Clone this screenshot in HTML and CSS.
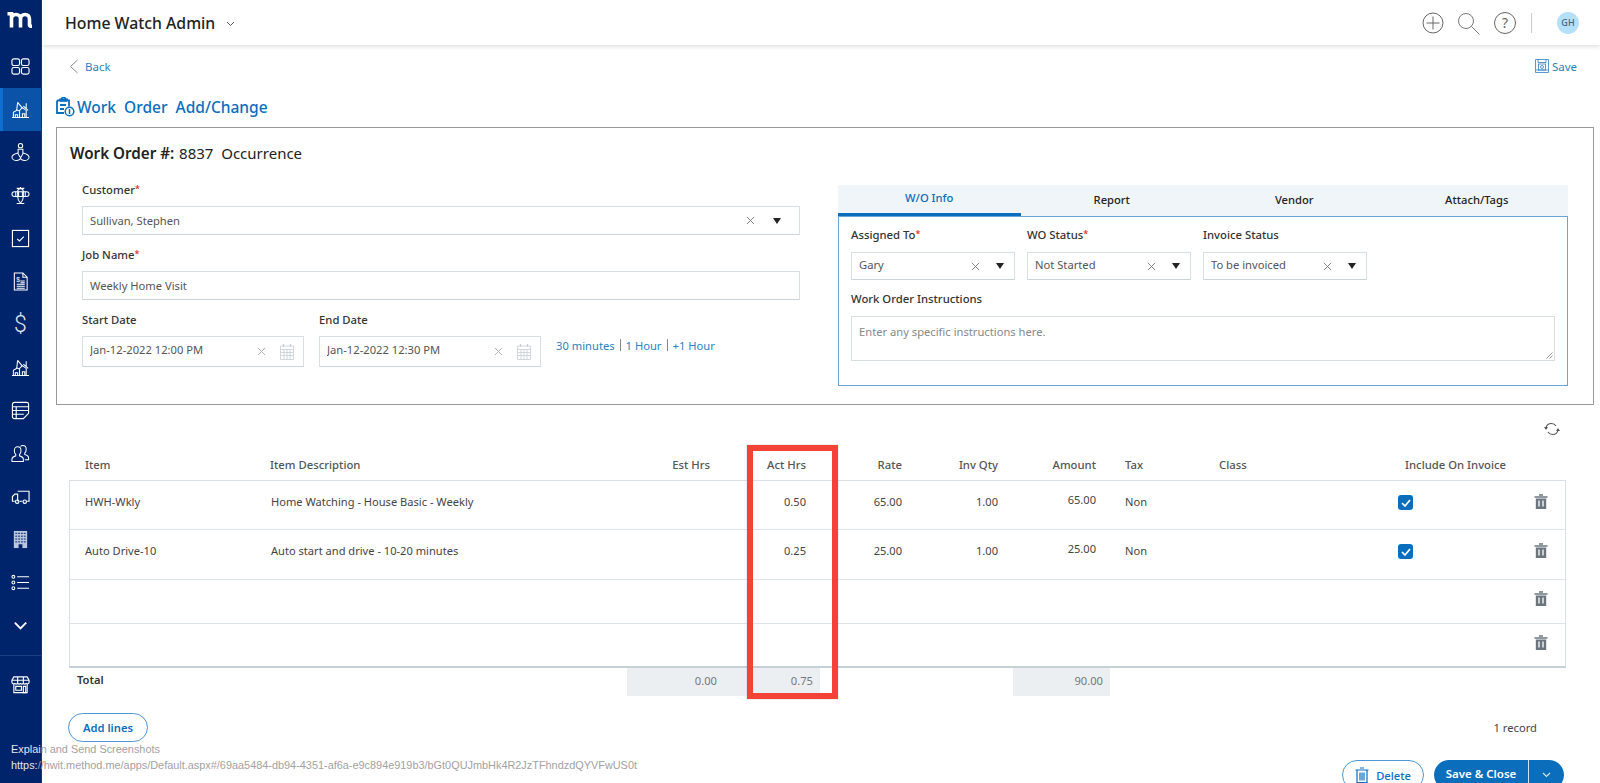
FILE: index.html
```html
<!DOCTYPE html>
<html lang="en">
<head>
    <meta charset="UTF-8">
    <meta name="viewport" content="width=device-width, initial-scale=1.0">
    <title>Work Order Add/Change</title>
    <link rel="stylesheet" href="styles.css">
</head>
<body>
    <svg class="defs" width="0" height="0">
        <symbol id="i-x" viewBox="0 0 10 10"><path d="M1 1l8 8M9 1l-8 8" fill="none" stroke="currentColor" stroke-width="1"/></symbol>
        <symbol id="i-caret" viewBox="0 0 10 8"><path d="M1 1h8L5 7z" fill="currentColor"/></symbol>
        <symbol id="i-cal" viewBox="0 0 14 17"><path d="M.5 3h13v13.500H.5zM.5 6.500h13M.5 9.500h13M.5 12.500h13M4 6.500v10M7 6.500v10M10 6.500v10" fill="none" stroke="currentColor" stroke-width=".8"/><path d="M3.500 1v3M10.500 1v3" stroke="currentColor" stroke-width="1.200"/></symbol>
        <symbol id="i-trash" viewBox="0 0 14 16"><path d="M5 1.500h4M.5 3.500h13" stroke="currentColor" stroke-width="1.600" fill="none"/><path d="M1.800 5h10.400v10.500H1.800z" fill="currentColor"/><path d="M5 7v6M9 7v6" stroke="#fff" stroke-width="1.300"/></symbol>
        <symbol id="i-house" viewBox="0 0 20 20"><g fill="none" stroke="#fff" stroke-width="1.100"><path d="M1 18.500h18M2.500 18.500v-5.500l4-2.500 3 1.500M4.500 18.500v-3h2.500v3M9 18.500V11l3-3 4 3v7.500M12 18.500v-4h2.500v4"/><path d="M7 2.500l5 6M7 2.500l-1 8M16 3.500v6M13 6.500l5 4.500"/></g></symbol>
    </svg>

    <div class="app">
        <!-- left nav -->
        <nav class="side">
            <div class="logo">
                <svg width="28" height="16" viewBox="0 0 28 16"><path d="M.5 1.700h4V15.500M4.500 7c0-3 2-4.500 4.500-4.500s4.500 1.500 4.500 4.500v8.500M13.500 7c0-3 2-4.500 4.500-4.500s4.500 1.500 4.500 4.500v6c0 1 .8 1.300 2.500 1.300" fill="none" stroke="#fff" stroke-width="3.600"/></svg>
            </div>
            <a class="nav-item">
                <svg class="nav-icon" viewBox="0 0 20 20"><g fill="none" stroke="#fff" stroke-width="1.200"><rect x="1" y="2" width="8" height="7" rx="2"/><rect x="11" y="2" width="8" height="7" rx="2"/><rect x="1" y="11" width="8" height="7" rx="2"/><rect x="11" y="11" width="8" height="7" rx="2"/></g></svg>
            </a>
            <a class="nav-item active"><svg class="nav-icon"><use href="#i-house"/></svg></a>
            <a class="nav-item">
                <svg class="nav-icon" viewBox="0 0 20 20"><g fill="none" stroke="#fff" stroke-width="1.100"><circle cx="10" cy="2.800" r="2.300"/><path d="M7.500 6.500h5v5l-2.500 4-2.500-4zM7 10.500C3.500 11.500 1 13 1 15s2.500 3.500 5 3.500c1.800 0 3-.8 4-2 1 1.200 2.200 2 4 2 2.500 0 5-1.500 5-3.500s-2.500-3.500-6-4.500"/></g></svg>
            </a>
            <a class="nav-item">
                <svg class="nav-icon" viewBox="0 0 20 20"><g fill="none" stroke="#fff" stroke-width="1.100"><path d="M6 2.500h8M10 1v2"/><rect x="1" y="6" width="18" height="5" rx="2.500"/><path d="M5 6v5M8 6v5M12 6v5M15 6v5"/><path d="M7 6c0-2 1-3 3-3s3 1 3 3v5c0 3-1 5-3 7-2-2-3-4-3-7zM6 18.500h8"/></g></svg>
            </a>
            <a class="nav-item">
                <svg class="nav-icon" viewBox="0 0 20 20"><rect x="1.500" y="1.500" width="17" height="17" fill="none" stroke="#fff" stroke-width="1.200"/><path d="M6.500 10.500l2.500 2 4.500-4.500" fill="none" stroke="#fff" stroke-width="1.200"/></svg>
            </a>
            <a class="nav-item">
                <svg class="nav-icon" viewBox="0 0 20 20"><g fill="none" stroke="#fff" stroke-width="1.100"><path d="M3.500 1h9l4.500 4.500V19h-13.500zM12.500 1v4.500H17"/><path d="M6 13h8.500M6 15h8.500M6 17h8.500M10 9.500h4.500M10 11.300h4.500"/></g><text class="doc-dollar" x="5.500" y="10.500">$</text></svg>
            </a>
            <a class="nav-item"><span class="nav-dollar">$</span></a>
            <a class="nav-item"><svg class="nav-icon"><use href="#i-house"/></svg></a>
            <a class="nav-item">
                <svg class="nav-icon" viewBox="0 0 20 20"><g fill="none" stroke="#fff" stroke-width="1.200"><path d="M3.500 1.500h13a2 2 0 0 1 2 2V13l-5.500 5.500H3.500a2 2 0 0 1-2-2v-13a2 2 0 0 1 2-2zM1.500 6h17M1.500 10h17M1.500 14h12M5.500 6v12"/></g></svg>
            </a>
            <a class="nav-item">
                <svg class="nav-icon" viewBox="0 0 20 20"><g fill="none" stroke="#fff" stroke-width="1.100"><path d="M1 18.500v-2.500c0-2 2-3 4-3.500v-1.500c-1-1-1.500-2-1.500-4C3.500 4.500 5 3 7 3s3.500 1.500 3.500 4c0 2-.5 3-1.500 4v1.500c2 .5 4 1.500 4 3.500v2.500z"/><path d="M10 2.500c.8-.8 1.500-1 2.500-1 2 0 3.500 1.500 3.500 4 0 2-.5 3-1.500 4V11c2 .5 4 1.500 4 3.500v2h-4"/></g></svg>
            </a>
            <a class="nav-item">
                <svg class="nav-icon" viewBox="0 0 20 20"><g fill="none" stroke="#fff" stroke-width="1.200"><path d="M7 4.500h12v10.500h-2M12 15H9M4 15H1.500v-5L4 7.500h3V15"/><circle cx="6.500" cy="15.500" r="1.800"/><circle cx="14.500" cy="15.500" r="1.800"/></g></svg>
            </a>
            <a class="nav-item">
                <svg class="nav-icon" viewBox="0 0 20 20"><path d="M3 1h14v18H3z" fill="#b9c6dd"/><path d="M4.500 3.500h11M4.500 6.500h11M4.500 9.500h11M4.500 12.500h11" stroke="#00246b" stroke-width="1" stroke-dasharray="2 1"/><path d="M8 15h4v4H8z" fill="#00246b"/></svg>
            </a>
            <a class="nav-item">
                <svg class="nav-icon" viewBox="0 0 20 20"><g fill="none" stroke="#fff" stroke-width="1.100"><circle cx="2.500" cy="4" r="1.500"/><circle cx="2.500" cy="10" r="1.500"/><circle cx="2.500" cy="16" r="1.500"/><path d="M6.500 4H19M6.500 10H19M6.500 16H19"/></g></svg>
            </a>
            <a class="nav-item">
                <svg class="nav-icon" viewBox="0 0 20 20"><path d="M4 7l6 6 6-6" fill="none" stroke="#fff" stroke-width="2"/></svg>
            </a>
            <div class="nav-sep"></div>
            <a class="nav-item">
                <svg class="nav-icon" viewBox="0 0 20 20"><g fill="none" stroke="#fff" stroke-width="1.200"><path d="M3 2h14l2 3.500V8a2 2 0 0 1-3 1 2.500 2.500 0 0 1-3 0 2.500 2.500 0 0 1-3 0 2.500 2.500 0 0 1-3 0 2.500 2.500 0 0 1-3 0 2 2 0 0 1-3-1V5.500zM1 5.500h18M7 2v7M13 2v7M3 9.500V18.500h14V9.500"/><path d="M5 12h6v4H5zM13 12h2.500v6.500H13z"/></g></svg>
            </a>
        </nav>

        <main class="main">
            <header class="topbar">
                <span class="app-name">Home Watch Admin</span>
                <svg class="app-caret" width="9" height="6" viewBox="0 0 9 6"><path d="M1 1l3.500 3.500L8 1" fill="none" stroke="#555" stroke-width="1"/></svg>
                <div class="top-icons">
                    <svg class="top-plus" width="22" height="22" viewBox="0 0 22 22"><g fill="none" stroke="#666" stroke-width="1"><circle cx="11" cy="11" r="10"/><path d="M11 4.500v13M4.500 11h13"/></g></svg>
                    <svg class="top-search" width="24" height="24" viewBox="0 0 24 24"><g fill="none" stroke="#777" stroke-width="1"><circle cx="9" cy="9" r="7.500"/><path d="M14.500 14.500l8 8"/></g></svg>
                    <span class="top-help">?</span>
                    <span class="top-sep"></span>
                    <span class="avatar">GH</span>
                </div>
            </header>

            <div class="toolbar">
                <a class="link back">
                    <svg width="10" height="15" viewBox="0 0 10 15"><path d="M8.500 1L1.500 7.500l7 6.500" fill="none" stroke="#888" stroke-width="1"/></svg>
                    Back
                </a>
                <a class="link save">
                    <svg width="14" height="14" viewBox="0 0 14 14"><g fill="none" stroke="#2f7fc1" stroke-width=".8"><path d="M.5.500h13v13H.5zM3 .5v3h8v-3M1 11h12"/><rect x="3.500" y="5" width="7" height="6"/><circle cx="7" cy="8" r="1.500"/></g></svg>
                    Save
                </a>
            </div>

            <h1 class="page-title">
                <svg width="19" height="20" viewBox="0 0 19 20"><path d="M1 3.500h3V2.500h1.500a2 2 0 0 1 4 0H11v1h2v6" fill="none" stroke="#0a6ebd" stroke-width="1.800"/><path d="M4 1.800h7v3H4z" fill="#0a6ebd"/><path d="M1 3.500V16h7" fill="none" stroke="#0a6ebd" stroke-width="1.800"/><path d="M4 7h6v2H4zM4 11h4v2H4z" fill="#0a6ebd"/><circle cx="13.500" cy="14.500" r="4.300" fill="none" stroke="#0a6ebd" stroke-width="1.500"/><path d="M13.500 12v5" stroke="#0a6ebd" stroke-width="1.500"/></svg>
                <span>Work&nbsp; Order&nbsp; Add/Change</span>
            </h1>

            <section class="card">
                <h2 class="card-head"><b>Work Order #:</b> 8837&nbsp; Occurrence</h2>
                <div class="card-body">
                    <div class="left-col">
                        <div class="field">
                            <label>Customer<em>*</em></label>
                            <div class="input">
                                <span class="val">Sullivan, Stephen</span>
                                <svg class="ico-x"><use href="#i-x"/></svg>
                                <svg class="ico-caret ico-caret-wide"><use href="#i-caret"/></svg>
                            </div>
                        </div>
                        <div class="field">
                            <label>Job Name<em>*</em></label>
                            <div class="input"><span class="val">Weekly Home Visit</span></div>
                        </div>
                        <div class="date-row">
                            <div class="field date-field">
                                <label>Start Date</label>
                                <div class="input date-input">
                                    <span class="val">Jan-12-2022 12:00 PM</span>
                                    <svg class="ico-x"><use href="#i-x"/></svg>
                                    <svg class="ico-cal"><use href="#i-cal"/></svg>
                                </div>
                            </div>
                            <div class="field date-field">
                                <label>End Date</label>
                                <div class="input date-input">
                                    <span class="val">Jan-12-2022 12:30 PM</span>
                                    <svg class="ico-x"><use href="#i-x"/></svg>
                                    <svg class="ico-cal"><use href="#i-cal"/></svg>
                                </div>
                            </div>
                            <div class="quick-links">
                                <a>30 minutes</a><i></i><a>1 Hour</a><i></i><a>+1 Hour</a>
                            </div>
                        </div>
                    </div>

                    <div class="right-col">
                        <div class="tabs">
                            <a class="tab active">W/O Info</a>
                            <a class="tab">Report</a>
                            <a class="tab">Vendor</a>
                            <a class="tab">Attach/Tags</a>
                        </div>
                        <div class="tab-panel">
                            <div class="panel-row">
                                <div class="field small">
                                    <label>Assigned To<em>*</em></label>
                                    <div class="input">
                                        <span class="val">Gary</span>
                                        <svg class="ico-x"><use href="#i-x"/></svg>
                                        <svg class="ico-caret"><use href="#i-caret"/></svg>
                                    </div>
                                </div>
                                <div class="field small">
                                    <label>WO Status<em>*</em></label>
                                    <div class="input">
                                        <span class="val">Not Started</span>
                                        <svg class="ico-x"><use href="#i-x"/></svg>
                                        <svg class="ico-caret"><use href="#i-caret"/></svg>
                                    </div>
                                </div>
                                <div class="field small">
                                    <label>Invoice Status</label>
                                    <div class="input">
                                        <span class="val">To be invoiced</span>
                                        <svg class="ico-x"><use href="#i-x"/></svg>
                                        <svg class="ico-caret"><use href="#i-caret"/></svg>
                                    </div>
                                </div>
                            </div>
                            <div class="field instr">
                                <label>Work Order Instructions</label>
                                <div class="textarea">
                                    Enter any specific instructions here.
                                    <svg class="grip" width="7" height="7" viewBox="0 0 7 7"><path d="M6.500.5l-6 6M6.500 3.500l-3 3" stroke="#777" stroke-width=".8"/></svg>
                                </div>
                            </div>
                        </div>
                    </div>
                </div>
            </section>

            <div class="refresh">
                <svg width="16" height="14" viewBox="0 0 16 14"><g fill="none" stroke="#555" stroke-width="1.100"><path d="M2 6c.5-3 3-4.500 5.500-4.500 2 0 3.500 1 4.500 2.500M14 8c-.5 3-3 4.500-5.500 4.500-2 0-3.500-1-4.500-2.500"/></g><path d="M0 5h4L2 8zM16 9h-4l2-3z" fill="#555"/></svg>
            </div>

            <section class="lines">
                <div class="grid head">
                    <div class="c-first">Item</div>
                    <div>Item Description</div>
                    <div class="num">Est Hrs</div>
                    <div class="num">Act Hrs</div>
                    <div class="num">Rate</div>
                    <div class="num">Inv Qty</div>
                    <div class="num">Amount</div>
                    <div class="c-tax">Tax</div>
                    <div>Class</div>
                    <div class="c-inc">Include On Invoice</div>
                    <div></div>
                </div>
                <div class="table">
                    <div class="grid row">
                        <div class="c-first">HWH-Wkly</div>
                        <div class="c-desc">Home Watching - House Basic - Weekly</div>
                        <div class="num"></div>
                        <div class="num">0.50</div>
                        <div class="num">65.00</div>
                        <div class="num">1.00</div>
                        <div class="num up">65.00</div>
                        <div class="c-tax">Non</div>
                        <div></div>
                        <div><span class="check"><svg width="10" height="8" viewBox="0 0 10 8"><path d="M1 4l3 3 5-6" fill="none" stroke="#fff" stroke-width="1.700"/></svg></span></div>
                        <div class="c-trash"><svg class="ico-trash"><use href="#i-trash"/></svg></div>
                    </div>
                    <div class="grid row row-2">
                        <div class="c-first">Auto Drive-10</div>
                        <div class="c-desc">Auto start and drive - 10-20 minutes</div>
                        <div class="num"></div>
                        <div class="num">0.25</div>
                        <div class="num">25.00</div>
                        <div class="num">1.00</div>
                        <div class="num up">25.00</div>
                        <div class="c-tax">Non</div>
                        <div></div>
                        <div><span class="check"><svg width="10" height="8" viewBox="0 0 10 8"><path d="M1 4l3 3 5-6" fill="none" stroke="#fff" stroke-width="1.700"/></svg></span></div>
                        <div class="c-trash"><svg class="ico-trash"><use href="#i-trash"/></svg></div>
                    </div>
                    <div class="row-empty"><svg class="ico-trash"><use href="#i-trash"/></svg></div>
                    <div class="row-empty last"><svg class="ico-trash"><use href="#i-trash"/></svg></div>
                </div>
                <div class="totals">
                    <div class="t-label">Total</div>
                    <div class="t-cell">0.00</div>
                    <div class="t-cell">0.75</div>
                    <div class="t-gap"></div>
                    <div class="t-cell">90.00</div>
                </div>
                <div class="highlight"></div>
            </section>

            <div class="lines-foot">
                <a class="pill">Add lines</a>
                <span class="records">1 record</span>
            </div>

            <div class="actions">
                <a class="pill pill-del">
                    <svg width="14" height="16" viewBox="0 0 14 16"><g fill="none" stroke="#0a6ebd" stroke-width="1.200"><path d="M5 1h4M.5 3h13M2 3v12.500h10V3M5 5.500v8M7 5.500v8M9 5.500v8"/></g></svg>
                    Delete
                </a>
                <div class="save-close">
                    <a class="sc-main">Save &amp; Close</a>
                    <a class="sc-more"><svg width="9" height="6" viewBox="0 0 9 6"><path d="M1 1l3.500 3.500L8 1" fill="none" stroke="#cfe3f5" stroke-width="1.200"/></svg></a>
                </div>
            </div>
        </main>
    </div>

    <!-- browser link hint that was caught by the screenshot -->
    <div class="hint">
        <div><span class="on-nav">Explai</span>n and Send Screenshots</div>
        <div><span class="on-nav">https:</span>//hwit.method.me/apps/Default.aspx#/69aa5484-db94-4351-af6a-e9c894e919b3/bGt0QUJmbHk4R2JzTFhndzdQYVFwUS0t</div>
    </div>
</body>
</html>
```

FILE: styles.css
```css
/* --- RESET & BASE -------------------------------------- */
* { box-sizing: border-box; margin: 0; padding: 0; }
html, body { height: 100%; overflow: hidden; background: #fff; }
body { font-family: "Noto Sans", "Open Sans", sans-serif; font-size: 11px; color: #444; position: relative; }
a { color: inherit; text-decoration: none; }
.defs { position: absolute; }

.app { display: flex; height: 783px; overflow: hidden; }

/* --- LEFT NAV ------------------------------------------ */
.side { width: 42px; flex: none; background: #00246b; display: flex; flex-direction: column; align-items: stretch; border-right: 1px solid #0a3a86; }
.logo { height: 45px; display: flex; align-items: center; justify-content: center; padding-bottom: 6px; }
.nav-item { height: 43px; flex: none; display: flex; align-items: center; justify-content: center; }
.nav-item.active { background: #0a53a8; border-left: 3px solid #0f6fd0; padding-right: 3px; }
.nav-icon { width: 19px; height: 19px; display: block; }
.nav-dollar { font-family: "Roboto", sans-serif; font-size: 23px; font-weight: 300; color: #dfe6f2; }
.doc-dollar { font-size: 7px; fill: #fff; font-family: "Liberation Sans", sans-serif; }
.nav-sep { height: 1px; background: #1c3f82; margin-top: 8px; margin-bottom: 7px; flex: none; }

/* --- MAIN ---------------------------------------------- */
.main { flex: 1; min-width: 0; position: relative; }

.topbar { height: 45px; display: flex; align-items: center; padding: 0 20px 0 23px; box-shadow: 0 1px 5px rgba(0, 0, 0, .16); position: relative; }
.app-name { font-size: 15.8px; font-weight: 500; color: #222; }
.app-caret { margin-left: 11px; margin-top: 2px; }
.top-icons { margin-left: auto; display: flex; align-items: center; }
.top-plus { margin-right: 13px; }
.top-search { margin-right: 13px; margin-top: 2px; }
.top-help { width: 22px; height: 22px; border: 1px solid #666; border-radius: 50%; font-size: 14px; line-height: 20px; text-align: center; color: #666; }
.top-sep { width: 1px; height: 20px; background: #ccc; margin: 0 25px 0 15px; }
.avatar { width: 22px; height: 22px; border-radius: 50%; background: #b5e0fb; color: #47627c; font-size: 9px; font-weight: 500; line-height: 22px; text-align: center; margin-right: 1px; }

.toolbar { height: 42px; display: flex; align-items: center; justify-content: space-between; padding: 0 23px 0 27px; }
.link { display: flex; align-items: center; gap: 6px; font-size: 11.5px; color: #2f7fc1; }
.save { gap: 3px; }

.page-title { height: 40px; padding: 0 0 0 14px; display: flex; align-items: center; gap: 2px; font-size: 15.5px; font-weight: 500; color: #0a6ebd; }

/* --- CARD ---------------------------------------------- */
.card { margin-left: 14px; width: 1538px; height: 278px; border: 1px solid #999; padding: 14px 25px 0; }
.card-head { font-size: 15px; font-weight: 400; line-height: 22px; color: #222; margin-left: -12px; margin-bottom: 18px; }
.card-head b { font-weight: 600; margin-right: 1px; font-size: 15.2px; }
.card-body { display: grid; grid-template-columns: 718px 730px; column-gap: 38px; }

.field label { display: block; height: 16px; line-height: 16px; font-size: 11.3px; font-weight: 500; color: #333; margin-bottom: 8px; }
.field em { color: #e02020; font-style: normal; font-size: 9px; position: relative; top: -2px; }
.left-col .field { margin-bottom: 12px; }

.input { height: 29px; border: 1px solid #d8dee2; border-bottom-color: #cdd4d9; display: flex; align-items: center; padding: 0 9px 0 7px; font-size: 11.2px; color: #555; border-radius: 1px; }
.val { flex: 1; white-space: nowrap; overflow: hidden; }
.ico-x { width: 9px; height: 9px; color: #777; flex: none; }
.ico-caret { width: 10px; height: 8px; color: #222; flex: none; margin-left: 15px; }
.ico-caret-wide { margin-left: 17px; margin-right: 8px; }
.ico-cal { width: 14px; height: 17px; color: #c6ced3; flex: none; margin-left: 14px; }

.date-row { display: flex; }
.date-field { width: 222px; margin-right: 15px; margin-bottom: 0; }
.date-input { height: 31px; }
.date-input .val { margin-top: -4px; }
.date-input .ico-x { color: #aaa; }
.quick-links { display: flex; align-items: center; font-size: 11.2px; color: #2f7fc1; margin-top: 19px; height: 28px; }
.quick-links i { width: 1px; height: 12px; background: #888; margin: 0 5px; }

/* --- TABS ---------------------------------------------- */
.right-col { margin-top: 3px; }
.tabs { display: grid; grid-template-columns: repeat(4, 1fr); height: 31px; background: #eff5f8; }
.tab { font-size: 11.2px; font-weight: 500; color: #222; text-align: center; line-height: 30px; padding-top: 0; }
.tab.active { color: #0a6ebd; border-bottom: 3px solid #0a6ebd; line-height: 26px; }
.tab-panel { height: 170px; border: 1px solid #6aa5d8; padding: 10px 12px 0; }
.panel-row { display: flex; gap: 12px; margin-bottom: 11px; }
.field.small { width: 164px; }
.field.small label, .instr label { margin-bottom: 9px; }
.field.small .input { height: 28px; }
.field.small .val { margin-top: -3px; }
.textarea { height: 45px; border: 1px solid #d8dee2; padding: 7px 7px; font-size: 11.2px; color: #888; position: relative; }
.grip { position: absolute; right: 1px; bottom: 1px; }

/* --- LINES TABLE --------------------------------------- */
.refresh { height: 47px; display: flex; align-items: center; justify-content: flex-end; padding: 0 40px 0 0; }
.lines { margin-left: 27px; width: 1497px; position: relative; }
.grid { display: grid; grid-template-columns: 200px 340px 100px 96px 96px 96px 98px 123px 178px 120px 48px; padding-left: 1px; }
.head { height: 28px; font-size: 11.3px; font-weight: 500; color: #555; line-height: 26px; }
.head .c-first { padding-left: 15px; }
.num { text-align: right; }
.c-tax { padding-left: 29px; }
.c-inc { padding-left: 8px; white-space: nowrap; }

.table { border: 1px solid #d8e1e5; border-bottom: 2px solid #c6d1d6; height: 188px; }
.table .grid { padding-left: 0; }
.row { height: 49px; border-bottom: 1px solid #dde5e9; padding-top: 12px; font-size: 11.1px; line-height: 18px; color: #444; }
.row-2 { height: 50px; }
.row > div:nth-child(n+3) { position: relative; }
.row .c-first { padding-left: 15px; }
.c-desc { padding-left: 1px; }
.row .up { top: -2px; }
.row-empty { height: 44px; border-bottom: 1px solid #dde5e9; padding: 10px 0 0 1447px; }
.row-empty.last { border-bottom: 0; height: 42px; }
.c-trash { padding-left: 17px; }
.ico-trash { width: 14px; height: 17px; color: #6c757d; display: block; }
.row-empty .ico-trash { margin-left: 17px; }
.check { width: 15px; height: 15px; margin-left: 1px; background: #0a6ebd; border-radius: 3px; display: flex; align-items: center; justify-content: center; margin-top: 2px; }

.totals { display: flex; height: 28px; font-size: 11.2px; line-height: 25px; color: #777; }
.t-label { width: 558px; padding-left: 8px; font-weight: 600; color: #333; line-height: 23px; }
.t-cell { width: 97px; background: #eceff1; text-align: right; padding-right: 7px; }
.t-gap { width: 193px; }
.t-label + .t-cell + .t-cell { width: 96px; }

.highlight { position: absolute; left: 678px; top: -7px; width: 91px; height: 254px; border: 6px solid #f44336; box-shadow: 0 0 1px rgba(0, 0, 0, .4); }

.lines-foot { margin: 17px 0 0 26px; width: 1469px; height: 29px; display: flex; justify-content: space-between; align-items: center; }
.pill { height: 29px; border: 1px solid #4d97d4; border-radius: 15px; padding: 0 14px; display: flex; align-items: center; font-size: 11.2px; font-weight: 600; color: #0a6ebd; }
.records { font-size: 11.2px; color: #444; }

.actions { display: flex; justify-content: flex-end; gap: 10px; margin-top: 18px; padding-right: 36px; }
.pill-del { width: 82px; height: 30px; justify-content: center; gap: 7px; padding: 0; font-weight: 500; }
.save-close { display: flex; width: 130px; height: 30px; background: #0a6ebd; border-radius: 15px; color: #fff; font-size: 11.5px; font-weight: 600; }
.sc-main { width: 95px; text-align: center; line-height: 28px; border-right: 1px solid #cfe3f5; }
.sc-more { flex: 1; display: flex; align-items: center; justify-content: center; }

/* --- LINK HINT ----------------------------------------- */
.hint { position: absolute; left: 11px; top: 741px; font-family: "Liberation Sans", sans-serif; font-size: 10.9px; line-height: 16px; color: #a2a2a2; white-space: nowrap; }
.on-nav { color: #e4e7ee; }
```
